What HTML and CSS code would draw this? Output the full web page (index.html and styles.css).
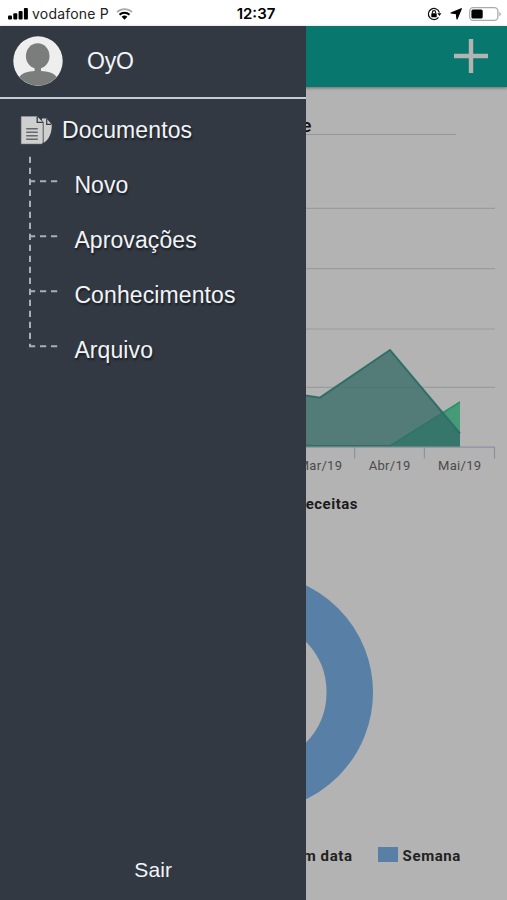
FILE: index.html
```html
<!DOCTYPE html>
<html lang="pt">
<head>
  <meta charset="UTF-8">
  <title>Documentos</title>
  <link rel="stylesheet" href="styles.css">
</head>
<body>
  <div class="status-bar">
    <div class="status-left">
      <svg class="signal" width="20" height="12" viewBox="0 0 20 12">
        <rect x="0" y="7.5" width="4" height="4" rx="1"/>
        <rect x="5.3" y="5.2" width="4" height="6.3" rx="1"/>
        <rect x="10.6" y="3" width="4" height="8.5" rx="1"/>
        <rect x="15.9" y="0" width="4" height="11.5" rx="1"/>
      </svg>
      <span class="carrier">vodafone P</span>
      <svg class="wifi" width="17" height="12" viewBox="0 0 17 12">
        <path d="M1 4.1a11 11 0 0 1 15 0" fill="none" stroke="#aaa" stroke-width="1.8"/>
        <path d="M3.5 6.7a7.3 7.3 0 0 1 10 0" fill="none" stroke="#000" stroke-width="2"/>
        <path d="M5.6 8.8a4.4 4.4 0 0 1 5.8 0L8.5 11.8z"/>
      </svg>
    </div>
    <span class="clock">12:37</span>
    <div class="status-right">
      <svg width="15" height="14" viewBox="0 0 15 14">
        <path d="M11.5 10.4A5.6 5.6 0 1 1 12.4 5.6" fill="none" stroke="#111" stroke-width="1.2"/>
        <path d="M10.4 6.3h4l-2 2.8z"/>
        <rect x="4.3" y="6.3" width="5.4" height="4" rx=".6"/>
        <path d="M5.4 6.5V5.2a1.6 1.6 0 0 1 3.2 0v1.3" fill="none" stroke="#111" stroke-width="1.1"/>
      </svg>
      <svg class="location" width="12" height="12" viewBox="0 0 12 12">
        <path d="M11.3.7 7 11 6.4 5.6 1 5z" stroke="#000" stroke-width="1.2" stroke-linejoin="round"/>
      </svg>
      <svg width="33" height="14" viewBox="0 0 33 14">
        <rect x=".7" y=".7" width="28.2" height="12.6" rx="3.5" fill="#fff" stroke="#aaa" stroke-width="1.3"/>
        <rect x="2.4" y="2.4" width="11.3" height="9.2" rx="1.6"/>
        <path d="M30.4 4.7q3 2.3 0 4.6z" fill="#aaa"/>
      </svg>
    </div>
  </div>

  <div class="app">
    <div class="toolbar">
      <svg width="34" height="34" viewBox="0 0 34 34">
        <path d="M17 0v34M0 17h34" stroke="#b3b3b3" stroke-width="4.4"/>
      </svg>
    </div>

    <div class="page">
      <div class="select">Hoje</div>

      <svg class="area-chart" width="507" height="345" viewBox="0 135 507 345">
        <path class="grid" d="M20 208.3h475M20 268.7h475M20 329h475M20 387.3h475"/>
        <path class="income" d="M250 446L390 446 460 402V447H250z"/>
        <path class="income-line" d="M390 446L460 402"/>
        <path class="balance" d="M250 387L320 397.7 390 350 460 433.5V447H250z"/>
        <path class="base-line" d="M250 443L316 446H392"/>
        <path class="balance-line" d="M250 387L320 397.7 390 350 460 433.5"/>
        <path class="axis" d="M20 447.2h474.5v11.5M424.4 447v11.5M354.6 447v11.5"/>
        <g class="labels">
          <text x="320" y="470">Mar/19</text>
          <text x="389.7" y="470">Abr/19</text>
          <text x="459.7" y="470">Mai/19</text>
        </g>
      </svg>

      <h2 class="chart-title">Receitas</h2>

      <svg class="donut" width="507" height="320" viewBox="0 514 507 320">
        <circle cx="254.5" cy="692.3" r="95.3"/>
      </svg>

      <div class="legend">
        <div class="legend-item"><i class="swatch"></i>Em data</div>
        <div class="legend-item"><i class="swatch"></i>Semana</div>
      </div>
    </div>

    <nav class="drawer">
      <div class="user">
        <svg width="50" height="50" viewBox="0 0 50 50">
          <circle cx="25" cy="25" r="24.7" fill="#eee"/>
          <ellipse cx="24.7" cy="20" rx="11.8" ry="12.8" fill="#7b7d7c"/>
          <path d="M21.6 30h6.4v4.9C35 35.4 40.5 36.6 43.7 41A24.7 24.7 0 0 1 6.3 41C9.5 36.6 15 35.4 21.6 34.9z" fill="#7b7d7c"/>
        </svg>
        <span class="user-name">OyO</span>
      </div>

      <div class="menu-title">
        <svg width="34" height="32" viewBox="0 0 34 32">
          <path d="M22 3.5h4.5l5.3 6.1c0 8-2.2 14-7.6 18H22z" fill="#cfcfcf"/>
          <path d="M26.7 4v5.4h4.6" fill="none" stroke="#323942" stroke-width="1.2"/>
          <path d="M.8 1H17.2l6 6V27q0 2.3-2 2.3H.8z" fill="#cfcfcf" stroke="#323942" stroke-width=".8"/>
          <path d="M17.2 1.7v5.7h5.7" fill="none" stroke="#323942" stroke-width="1.3"/>
          <path d="M6.2 13.8h11.6M6.2 17.3h11.6M6.2 20.8h11.6M6.2 24.2h11.6" stroke="#68696b" stroke-width="1.5"/>
        </svg>
        <span>Documentos</span>
      </div>

      <div class="tree">
        <svg width="32" height="195" viewBox="0 0 32 195">
          <path d="M2 .7V191" stroke-dasharray="6.2 4.8"/>
          <path d="M1 25.3h29M1 80.3h29M1 135.3h29M1 190.3h29" stroke-dasharray="6.2 4.8"/>
        </svg>
        <ul class="submenu">
          <li>Novo</li>
          <li>Aprovações</li>
          <li>Conhecimentos</li>
          <li>Arquivo</li>
        </ul>
      </div>

      <div class="logout">Sair</div>
    </nav>
  </div>
</body>
</html>
```

FILE: styles.css
```css
body, html {
  margin: 0;
  padding: 0;
  height: 100%;
  overflow: hidden;
  font-family: "Liberation Sans", Arial, sans-serif;
  background: #b3b3b3;
}
body {
  display: flex;
  flex-direction: column;
}
svg {
  display: block;
  flex: none;
}

/* status bar */
.status-bar {
  display: grid;
  grid-template-columns: 1fr auto 1fr;
  align-items: center;
  height: 26px;
  padding: 1px 5px 0 8px;
  box-sizing: border-box;
  background: #fff;
  color: #222;
  font-family: Inter, sans-serif;
  font-size: 14px;
}
.status-left, .status-right {
  display: flex;
  align-items: center;
}
.status-right {
  justify-content: flex-end;
  gap: 7.5px;
}
.carrier {
  margin: 0 7px 0 4px;
  letter-spacing: 0.2px;
}
.clock {
  padding-left: 2px;
  color: #000;
  font-size: 15px;
  font-weight: 600;
}

/* page behind the drawer */
.app {
  flex: 1;
  position: relative;
}
.toolbar {
  display: flex;
  justify-content: flex-end;
  align-items: center;
  height: 60.5px;
  padding-right: 19px;
  box-sizing: border-box;
  background: #08776d;
  box-shadow: 0 1px 3px rgba(0, 0, 0, 0.4);
}
.page {
  font-family: Roboto, sans-serif;
}
.select {
  width: 405px;
  height: 48px;
  margin-left: 51px;
  padding: 28px 144.5px 0 0;
  box-sizing: border-box;
  border-bottom: 1px solid #969696;
  color: #111;
  font-size: 19px;
  font-weight: 500;
  line-height: 22px;
  text-align: right;
}
.grid {
  fill: none;
  stroke: #999b9d;
  stroke-width: 1.2;
}
.income {
  fill: #479a78;
}
.income-line {
  fill: none;
  stroke: #299269;
  stroke-width: 1.5;
}
.balance {
  fill: rgba(50, 105, 101, 0.74);
}
.balance-line, .base-line {
  fill: none;
  stroke: #306f67;
  stroke-width: 2;
}
.axis {
  fill: none;
  stroke: #8c939e;
  stroke-width: 1.2;
}
.labels {
  fill: #4b4b4b;
  font-size: 13px;
  letter-spacing: 0.3px;
  text-anchor: middle;
}
.chart-title {
  margin: 14px 0 0;
  padding-right: 149px;
  color: #1b1b1b;
  font-size: 15px;
  line-height: 20px;
  letter-spacing: 0.5px;
  text-align: right;
}
.donut circle {
  fill: none;
  stroke: #5880a6;
  stroke-width: 46.5;
}
.legend {
  display: flex;
  justify-content: flex-end;
  gap: 25px;
  margin-top: 12px;
  padding-right: 46px;
  color: #222;
  font-size: 15px;
  font-weight: bold;
  line-height: 20px;
  letter-spacing: 0.6px;
}
.legend-item {
  display: flex;
  align-items: center;
}
.swatch {
  width: 20px;
  height: 15px;
  margin: 0 5px 2px 0;
  background: #5880a6;
}

/* side drawer */
.drawer {
  position: absolute;
  top: 0;
  left: 0;
  bottom: 0;
  display: flex;
  flex-direction: column;
  width: 306.4px;
  background: #323942;
  color: #f1f4f8;
  font-size: 23px;
  letter-spacing: 0.1px;
  text-shadow: 1px 2px 2px rgba(0, 0, 0, 0.5);
}
.user {
  display: flex;
  align-items: center;
  gap: 24px;
  height: 73px;
  padding: 0 0 1px 13px;
  box-sizing: border-box;
  border-bottom: 2px solid #c3ced8;
}
.user-name {
  letter-spacing: -0.2px;
  text-shadow: none;
}
.menu-title {
  display: flex;
  align-items: center;
  gap: 8px;
  height: 32px;
  margin-top: 16px;
  padding-left: 20px;
}
.menu-title span {
  padding-bottom: 2px;
}
.tree {
  display: flex;
  padding: 9px 0 0 28px;
}
.tree svg {
  fill: none;
  stroke: #a9afb5;
  stroke-width: 2;
}
.submenu {
  list-style: none;
  margin: 2px 0 0 14.4px;
  padding: 0;
}
.submenu li {
  height: 55px;
  line-height: 55px;
}
.logout {
  margin-top: auto;
  padding-bottom: 18px;
  font-size: 21px;
  line-height: 24px;
  text-align: center;
  text-shadow: none;
}
```
